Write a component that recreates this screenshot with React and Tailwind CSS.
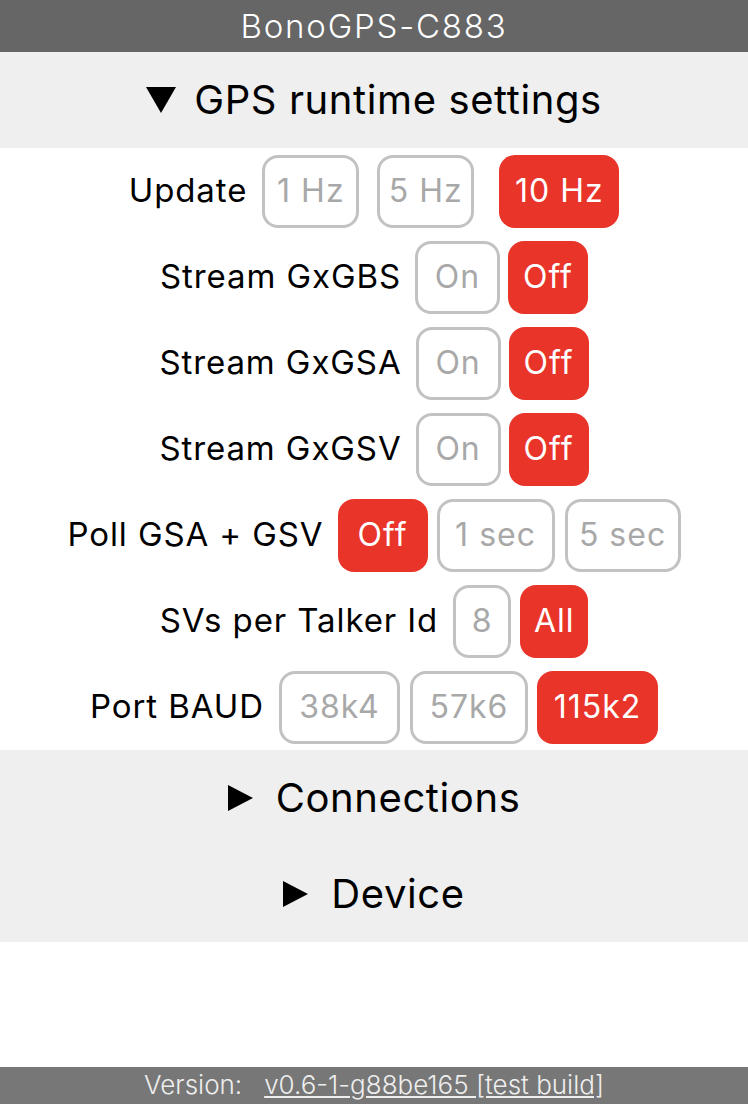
const font = { fontFamily: '"Inter", "Roboto", sans-serif' };

const rows = [
  {
    label: "Update",
    labelGap: "mr-[15px]",
    options: [
      { text: "1 Hz", w: "w-[97px]", gap: "mr-[18px]" },
      { text: "5 Hz", w: "w-[97px]", gap: "mr-[25px]" },
      { text: "10 Hz", w: "w-[120px]", on: true },
    ],
  },
  {
    label: "Stream GxGBS",
    labelGap: "mr-[14px]",
    options: [
      { text: "On", w: "w-[85px]", gap: "mr-[8px]" },
      { text: "Off", w: "w-[80px]", on: true },
    ],
  },
  {
    label: "Stream GxGSA",
    labelGap: "mr-[14px]",
    options: [
      { text: "On", w: "w-[85px]", gap: "mr-[8px]" },
      { text: "Off", w: "w-[80px]", on: true },
    ],
  },
  {
    label: "Stream GxGSV",
    labelGap: "mr-[14px]",
    options: [
      { text: "On", w: "w-[85px]", gap: "mr-[8px]" },
      { text: "Off", w: "w-[80px]", on: true },
    ],
  },
  {
    label: "Poll GSA + GSV",
    labelGap: "mr-[14px]",
    options: [
      { text: "Off", w: "w-[90px]", gap: "mr-[9px]", on: true },
      { text: "1 sec", w: "w-[118px]", gap: "mr-[10px]" },
      { text: "5 sec", w: "w-[116px]" },
    ],
  },
  {
    label: "SVs per Talker Id",
    labelGap: "mr-[15px]",
    options: [
      { text: "8", w: "w-[58px]", gap: "mr-[9px]" },
      { text: "All", w: "w-[68px]", on: true },
    ],
  },
  {
    label: "Port BAUD",
    labelGap: "mr-[15px]",
    options: [
      { text: "38k4", w: "w-[121px]", gap: "mr-[10px]" },
      { text: "57k6", w: "w-[118px]", gap: "mr-[9px]" },
      { text: "115k2", w: "w-[121px]", on: true },
    ],
  },
];

const Triangle = ({ down }) =>
  down ? (
    <svg width="30" height="26" viewBox="0 0 30 26" className="mr-[18px]">
      <path d="M0 0h30L15 26z" fill="#000" />
    </svg>
  ) : (
    <svg width="25" height="26" viewBox="0 0 25 26" className="mr-[23px]">
      <path d="M0 0l25 13L0 26z" fill="#000" />
    </svg>
  );

function Summary({ title, open }) {
  return (
    <div className="h-[96px] bg-[#efefef] flex items-center justify-center text-[40px] tracking-[0.6px] text-black">
      <Triangle down={open} />
      <span>{title}</span>
    </div>
  );
}

export default function App() {
  return (
    <div className="min-h-screen flex flex-col bg-white" style={font}>
      <div className="h-[52px] bg-[#666666] text-white text-[33px] font-light tracking-[1.8px] leading-[52px] text-center">
        BonoGPS-C883
      </div>

      <Summary title="GPS runtime settings" open />

      <div>
        {rows.map((row) => (
          <div key={row.label} className="h-[86px] flex items-center justify-center">
            <span className={`text-[33px] tracking-[0.9px] text-black whitespace-nowrap ${row.labelGap}`}>{row.label}</span>
            {row.options.map((opt) => (
              <div
                key={opt.text}
                className={`h-[73px] ${opt.w} ${opt.gap || ""} rounded-[16px] flex items-center justify-center text-[32px] tracking-[1px] whitespace-nowrap ${
                  opt.on
                    ? "bg-[#e9342a] text-white"
                    : "border-[3px] border-[#c2c2c2] text-[#a8a8a8]"
                }`}
              >
                {opt.text}
              </div>
            ))}
          </div>
        ))}
      </div>

      <Summary title="Connections" />
      <Summary title="Device" />

      <div className="mt-auto h-[37px] overflow-hidden bg-[#777777] text-[#eeeeee] text-[26px] font-light leading-[28px] pt-[4px] text-center whitespace-pre">
        {"Version:   "}
        <a href="#" className="underline">v0.6-1-g88be165 [test build]</a>
      </div>
    </div>
  );
}
